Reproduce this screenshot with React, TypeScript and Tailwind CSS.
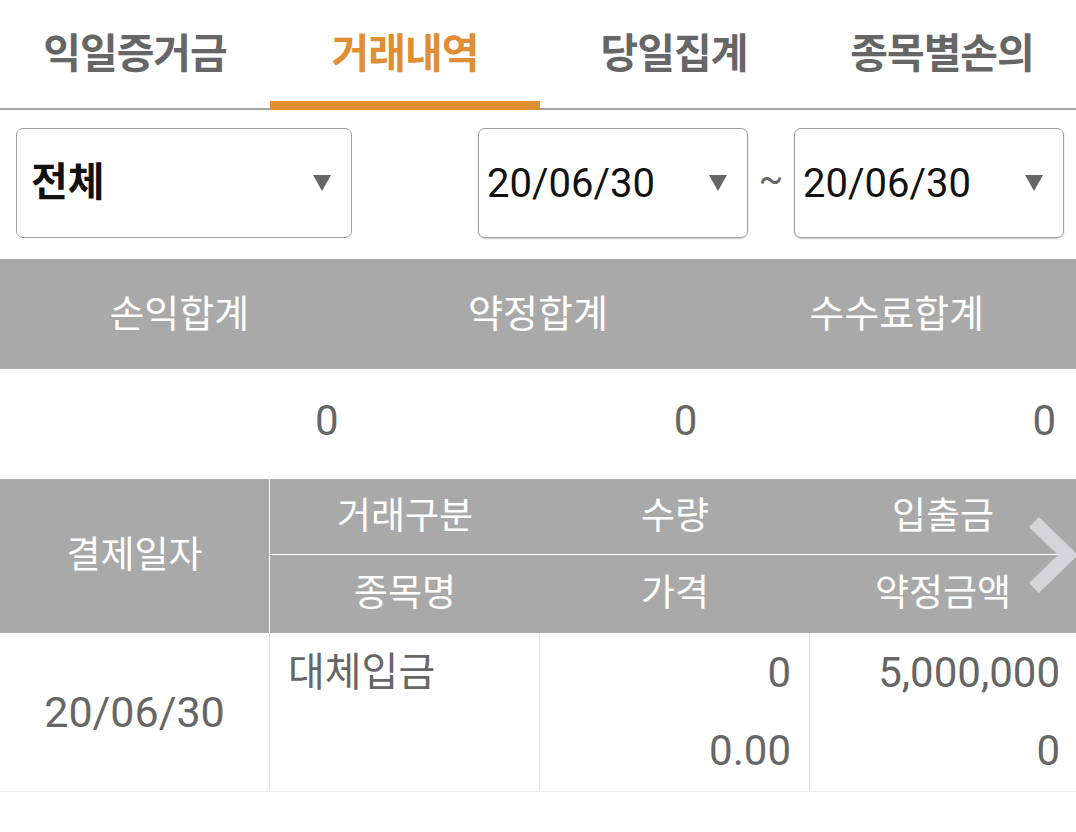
import React from 'react';

const tabs = ['익일증거금', '거래내역', '당일집계', '종목별손의'];
const font = "font-['Roboto','Noto_Sans_CJK_KR',sans-serif]";

function Caret() {
  return (
    <svg width="18" height="16" viewBox="0 0 18 16" className="shrink-0">
      <path d="M0 0H18L9 16Z" fill="#666666" />
    </svg>
  );
}

function DateBox({ value }: { value: string }) {
  return (
    <div className="w-[270px] h-[110px] shrink-0 border border-[#9e9e9e] rounded-[7px] shadow-[0_1px_2px_rgba(0,0,0,0.2)] flex items-center justify-between pl-[8px] pr-[20px]">
      <span className="text-[40px] text-[#111111] pt-[2px]">{value}</span>
      <Caret />
    </div>
  );
}

export default function App() {
  return (
    <div className={`w-[1076px] h-[832px] bg-white ${font}`}>
      {/* Tabs */}
      <div className="grid grid-cols-[270px_270px_268px_1fr]">
        {tabs.map((t, i) => (
          <div
            key={t}
            className={`h-[110px] flex items-center justify-center text-[41px] font-bold tracking-[-1px] ${
              i === 1
                ? 'text-[#e08e33] shadow-[inset_0_-9px_0_#e08e33]'
                : 'text-[#666666] shadow-[inset_0_-2px_0_#a6a6a6]'
            }`}
          >
            {t}
          </div>
        ))}
      </div>

      {/* Filters */}
      <div className="flex items-center pl-4 pr-[12px] pt-[18px]">
        <div className="w-[336px] h-[110px] shrink-0 border border-[#9e9e9e] rounded-[7px] flex items-center justify-between pl-[14px] pr-[20px]">
          <span className="text-[40px] font-bold text-[#111111]">전체</span>
          <Caret />
        </div>
        <div className="ml-[126px] flex items-center shrink-0">
          <DateBox value="20/06/30" />
          <div className="w-[46px] shrink-0 text-center text-[36px] text-[#666666] pb-[8px]">~</div>
          <DateBox value="20/06/30" />
        </div>
      </div>

      {/* Summary */}
      <div className="mt-[21px]">
        <div className="grid grid-cols-3 h-[110px] bg-[#a9a9a9] text-white text-[38px]">
          <div className="flex items-center justify-center">손익합계</div>
          <div className="flex items-center justify-center">약정합계</div>
          <div className="flex items-center justify-center">수수료합계</div>
        </div>
        <div className="grid grid-cols-3 h-[110px] text-[42px] text-[#666666]">
          <div className="flex items-center justify-end pr-[20px] pb-[8px]">0</div>
          <div className="flex items-center justify-end pr-[20px] pb-[8px]">0</div>
          <div className="flex items-center justify-end pr-[20px] pb-[8px]">0</div>
        </div>
      </div>

      {/* Table header */}
      <div className="relative flex h-[154px] bg-[#a9a9a9] text-white text-[37px]">
        <div className="w-[270px] border-r border-white flex items-center justify-center">결제일자</div>
        <div className="flex-1 flex flex-col">
          <div className="grid grid-cols-[270px_270px_1fr] h-[76px] border-b border-white">
            <div className="flex items-center justify-center">거래구분</div>
            <div className="flex items-center justify-center">수량</div>
            <div className="flex items-center justify-center">입출금</div>
          </div>
          <div className="grid grid-cols-[270px_270px_1fr] flex-1">
            <div className="flex items-center justify-center">종목명</div>
            <div className="flex items-center justify-center">가격</div>
            <div className="flex items-center justify-center">약정금액</div>
          </div>
        </div>
        <svg width="52" height="82" viewBox="0 0 52 82" className="absolute left-[1024px] top-[35px]">
          <polyline points="10,8 44,41 10,74" fill="none" stroke="#d4d4da" strokeWidth="14" strokeLinejoin="miter" />
        </svg>
      </div>

      {/* Data row */}
      <div className="grid grid-cols-[270px_270px_270px_1fr] h-[159px] border-b border-[#ececec] text-[#666666]">
        <div className="border-r border-[#e4e4e4] flex items-center justify-center text-[43px]">20/06/30</div>
        <div className="border-r border-[#e4e4e4] pl-[18px] pt-[10px] text-[40px]">대체입금</div>
        <div className="border-r border-[#e4e4e4] flex flex-col text-[42px] pr-[18px]">
          <div className="h-[78px] flex items-center justify-end">0</div>
          <div className="h-[78px] flex items-center justify-end">0.00</div>
        </div>
        <div className="flex flex-col text-[42px] pr-[16px]">
          <div className="h-[78px] flex items-center justify-end">5,000,000</div>
          <div className="h-[78px] flex items-center justify-end">0</div>
        </div>
      </div>
    </div>
  );
}
